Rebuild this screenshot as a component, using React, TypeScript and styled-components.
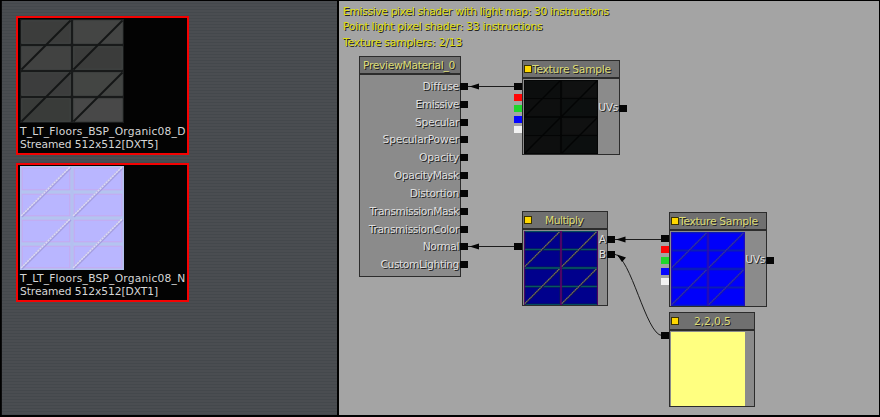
import React from "react";
import styled, { createGlobalStyle } from "styled-components";

const Global = createGlobalStyle`
  * { box-sizing: border-box; }
  body { margin: 0; background: #000; font-family: "DejaVu Sans", sans-serif; font-size: 10.7px; }
`;

const Window = styled.main`
  display: flex;
  width: 880px;
  height: 417px;
  padding: 1px 1px 2px 1px;
  gap: 2px;
  background: #000;
  overflow: hidden;
`;

const Browser = styled.aside`
  width: 336px;
  display: flex;
  flex-direction: column;
  align-items: flex-start;
  gap: 8px;
  padding: 15px;
  border-left: 1px solid #0c0c0d;
  padding-left: 14px;
  background: repeating-linear-gradient(to bottom, #4a4d51 0 2px, #44484c 2px 3px);
`;

const Card = styled.section`
  display: flex;
  flex-direction: column;
  gap: 2px;
  width: 173px;
  height: 139px;
  border: 2px solid #f40202;
  background: #030303;
  padding: 1px 2px;
  color: #d6d6d6;
  overflow: hidden;
`;

const Caption = styled.div<{ $spacing: number }>`
  height: 13px;
  line-height: 13px;
  white-space: nowrap;
  letter-spacing: ${(p) => p.$spacing}px;
`;

const Graph = styled.section`
  position: relative;
  flex: 1;
  background: #a4a4a4;
`;

const Stats = styled.div`
  padding: 3px 4px;
`;

const Stat = styled.p<{ $spacing: number }>`
  margin: 0;
  height: 15.4px;
  line-height: 15px;
  color: #dede14;
  text-shadow: 1px 1px 0 #222;
  white-space: nowrap;
  letter-spacing: ${(p) => p.$spacing}px;
`;

const NodeBox = styled.article<{ $x: number; $y: number }>`
  position: absolute;
  left: ${(p) => p.$x - 347}px;
  top: ${(p) => p.$y - 1}px;
  display: flex;
`;

const Frame = styled.div<{ $w: number }>`
  width: ${(p) => p.$w}px;
`;

const Header = styled.header<{ $inset: number; $gap: number }>`
  display: flex;
  align-items: center;
  gap: ${(p) => p.$gap}px;
  height: 18px;
  padding-left: ${(p) => p.$inset}px;
  border: 1px solid #2c2c2c;
  background: #707070;
`;

const Marker = styled.i`
  flex: none;
  width: 8px;
  height: 8px;
  background: #ffd800;
  border: 1px solid #3a3200;
`;

const Title = styled.span<{ $spacing: number }>`
  color: #dcdc78;
  text-shadow: 1px 1px 0 #222;
  white-space: nowrap;
  height: 16px;
  line-height: 17.5px;
  letter-spacing: ${(p) => p.$spacing}px;
`;

const Body = styled.div<{ $h: number }>`
  display: flex;
  justify-content: space-between;
  height: ${(p) => p.$h}px;
  padding: 1px;
  border: 1px solid #2c2c2c;
  background: #8b8b8b;
`;

const Labels = styled.div<{ $top: number; $pitch: number }>`
  flex: 1;
  min-width: 0;
  display: flex;
  flex-direction: column;
  align-items: flex-end;
  padding-top: ${(p) => p.$top}px;
  line-height: ${(p) => p.$pitch}px;
`;

const Label = styled.span<{ $spacing: number }>`
  color: #dfdfdf;
  text-shadow: 1px 1px 0 #222;
  white-space: nowrap;
  letter-spacing: ${(p) => p.$spacing}px;
`;

const Pins = styled.div<{ $top: number; $gap?: number }>`
  display: flex;
  flex-direction: column;
  gap: ${(p) => p.$gap ?? 0}px;
  width: 8px;
  padding-top: ${(p) => p.$top}px;

  ${Frame} + & {
    margin-left: -1px;
  }
`;

const Pin = styled.i<{ $c?: string }>`
  flex: none;
  height: 7px;
  background: ${(p) => p.$c ?? "#050505"};
`;

const Swatch = styled.div`
  width: 74px;
  height: 74px;
  background: #ffff80;
`;

const Wires = styled.svg`
  position: absolute;
  inset: 0;
  pointer-events: none;
`;

const Picture = styled.svg`
  display: block;
  flex: none;
`;

type Kind = "stone" | "bump" | "dark" | "multiply" | "blue";

interface Palette {
  fill: string[];
  seam: string;
  edge: string;
  column: string;
  groove: string;
  glint: string;
}

const palettes: Record<Kind, Palette> = {
  stone: {
    fill: ["#3c3d3c", "#444544", "#414241", "#3b3c3b", "#3c3d3d", "#434543", "#393b39", "#484848"],
    seam: "#181a1a", edge: "#444645", column: "#181a1a", groove: "#141616", glint: "#141616",
  },
  bump: { fill: ["#b9b6ff"], seam: "#b4c4f0", edge: "#c6a8f0", column: "#b4c0f0", groove: "#a49ee0", glint: "#dcdaf2" },
  dark: {
    fill: ["#0c0e0e", "#101111", "#0e0f0f", "#0c0f0f"],
    seam: "#040505", edge: "#111313", column: "#040505", groove: "#030404", glint: "#030404",
  },
  multiply: { fill: ["#00008c"], seam: "#06585e", edge: "#060a66", column: "#5c0468", groove: "#121258", glint: "#7a7658" },
  blue: { fill: ["#0000fa"], seam: "#0a20b4", edge: "#0a0ad8", column: "#2a0cb4", groove: "#1212b8", glint: "#3434a4" },
};

function Texture({ kind, size }: { kind: Kind; size: number }) {
  const p = palettes[kind];
  const heavy = kind === "stone" || kind === "dark";
  const inset = kind === "bump" ? 2.2 : 1.7;
  return (
    <Picture width={size} height={size} viewBox="0 0 104 104">
      <rect width="104" height="104" fill={p.seam} />
      <path d="M0 0V104M52 0V104M104 0V104" stroke={p.column} strokeWidth="3" />
      {[0, 1, 2, 3].map((r) =>
        [0, 1].map((c) => (
          <rect
            key={`${r}${c}`}
            x={c * 52 + inset}
            y={r * 26 + inset}
            width={52 - inset * 2}
            height={26 - inset * 2}
            fill={p.fill[(r * 2 + c) % p.fill.length]}
            stroke={p.edge}
            strokeWidth="1"
          />
        ))
      )}
      {[0, 52].map((x) =>
        [0, 52].map((y) => (
          <g key={`${x}${y}`}>
            <path d={`M${x + 1.5} ${y + 50.5}L${x + 50.5} ${y + 1.5}`} stroke={p.groove} strokeWidth={heavy ? 2 : 2.8} />
            {!heavy && (
              <path d={`M${x + 1} ${y + 50}L${x + 50} ${y + 1}`} stroke={p.glint} strokeWidth="1.6" strokeDasharray="2.4 .5" />
            )}
          </g>
        ))
      )}
    </Picture>
  );
}

const channels = ["#050505", "#ff0505", "#1fd62c", "#0505ff", "#f2f2f2"];

function SampleNode({ x, y, kind }: { x: number; y: number; kind: Kind }) {
  return (
    <NodeBox $x={x} $y={y}>
      <Pins $top={23} $gap={3.85}>
        {channels.map((c) => (
          <Pin key={c} $c={c} />
        ))}
      </Pins>
      <Frame $w={98}>
        <Header $inset={1} $gap={0}>
          <Marker />
          <Title $spacing={-0.27}>Texture Sample</Title>
        </Header>
        <Body $h={77}>
          <Texture kind={kind} size={74} />
          <Labels $top={21} $pitch={14}>
            <Label $spacing={-0.3}>UVs</Label>
          </Labels>
        </Body>
      </Frame>
      <Pins $top={45}>
        <Pin />
      </Pins>
    </NodeBox>
  );
}

const inputs = [
  { name: "Diffuse", spacing: -0.15 },
  { name: "Emissive", spacing: -0.45 },
  { name: "Specular", spacing: -0.35 },
  { name: "SpecularPower", spacing: -0.2 },
  { name: "Opacity", spacing: -0.15 },
  { name: "OpacityMask", spacing: -0.3 },
  { name: "Distortion", spacing: -0.3 },
  { name: "TransmissionMask", spacing: -0.44 },
  { name: "TransmissionColor", spacing: -0.4 },
  { name: "Normal", spacing: -0.4 },
  { name: "CustomLighting", spacing: -0.4 },
];

export default function App() {
  return (
    <>
      <Global />
      <Window>
        <Browser>
          <Card>
            <Texture kind="stone" size={104} />
            <div>
              <Caption $spacing={0.2}>T_LT_Floors_BSP_Organic08_D</Caption>
              <Caption $spacing={-0.07}>Streamed 512x512[DXT5]</Caption>
            </div>
          </Card>
          <Card>
            <Texture kind="bump" size={104} />
            <div>
              <Caption $spacing={0.2}>T_LT_Floors_BSP_Organic08_N</Caption>
              <Caption $spacing={-0.07}>Streamed 512x512[DXT1]</Caption>
            </div>
          </Card>
        </Browser>
        <Graph>
          <Stats>
            <Stat $spacing={-0.32}>Emissive pixel shader with light map: 30 instructions</Stat>
            <Stat $spacing={-0.23}>Point light pixel shader: 33 instructions</Stat>
            <Stat $spacing={-0.15}>Texture samplers: 2/13</Stat>
          </Stats>
          <Wires width="540" height="414" viewBox="339 1 540 414" fill="none" stroke="#1c1c1c">
            <path d="M468 86.5H515M468 246.5H515M614 239.5H662M614 254C631 256 646 335 662 335.5" />
            <path d="M469.5 86.5l9.5-3v6zM469.5 246.5l9.5-3v6zM616 239.5l9.5-3v6zM617 254.5l9 3-4 4.5z" fill="#050505" stroke="none" />
          </Wires>
          <NodeBox $x={367} $y={56}>
            <Frame $w={102}>
              <Header $inset={3} $gap={0}>
                <Title $spacing={-0.3}>PreviewMaterial_0</Title>
              </Header>
              <Body $h={203}>
                <Labels $top={2} $pitch={17.83}>
                  {inputs.map((i) => (
                    <Label key={i.name} $spacing={i.spacing}>{i.name}</Label>
                  ))}
                </Labels>
              </Body>
            </Frame>
            <Pins $top={27} $gap={10.83}>
              {inputs.map((i) => (
                <Pin key={i.name} />
              ))}
            </Pins>
          </NodeBox>
          <SampleNode x={522} y={60} kind="dark" />
          <NodeBox $x={522} $y={211}>
            <Pins $top={32}>
              <Pin />
            </Pins>
            <Frame $w={86}>
              <Header $inset={1} $gap={13}>
                <Marker />
                <Title $spacing={-0.5}>Multiply</Title>
              </Header>
              <Body $h={77}>
                <Texture kind="multiply" size={74} />
                <Labels $top={1} $pitch={15}>
                  <Label $spacing={0}>A</Label>
                  <Label $spacing={0}>B</Label>
                </Labels>
              </Body>
            </Frame>
            <Pins $top={25} $gap={8}>
              <Pin />
              <Pin />
            </Pins>
          </NodeBox>
          <SampleNode x={669} y={212} kind="blue" />
          <NodeBox $x={669} $y={312}>
            <Pins $top={20}>
              <Pin />
            </Pins>
            <Frame $w={86}>
              <Header $inset={1} $gap={15}>
                <Marker />
                <Title $spacing={-0.1}>2,2,0.5</Title>
              </Header>
              <Body $h={77}>
                <Swatch />
              </Body>
            </Frame>
          </NodeBox>
        </Graph>
      </Window>
    </>
  );
}
